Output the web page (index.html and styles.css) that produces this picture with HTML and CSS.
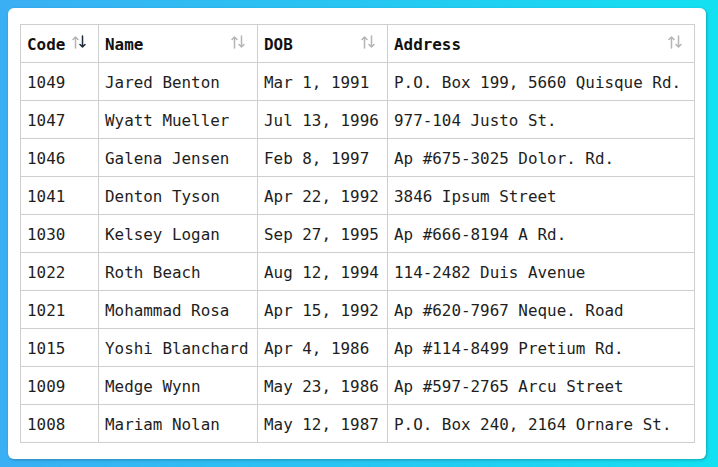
FILE: index.html
```html
<!DOCTYPE html>
<html>
<head>
<meta charset="utf-8">
<link rel="stylesheet" href="styles.css">
</head>
<body>
<div class="card">
<table class="grid">
<colgroup><col class="c1"><col class="c2"><col class="c3"><col class="c4"></colgroup>
<thead>
<tr>
<th><div class="th"><span>Code</span><svg class="sort active" viewBox="0 0 16 14" width="16" height="14"><path class="up" d="M4.5 13V2M2 4.5L4.5 2L7 4.5"/><path class="down" d="M11.5 1V12M9 9.5L11.5 12L14 9.5"/></svg></div></th>
<th><div class="th"><span>Name</span><svg class="sort" viewBox="0 0 16 14" width="16" height="14"><path class="up" d="M4.5 13V2M2 4.5L4.5 2L7 4.5"/><path class="down" d="M11.5 1V12M9 9.5L11.5 12L14 9.5"/></svg></div></th>
<th><div class="th"><span>DOB</span><svg class="sort" viewBox="0 0 16 14" width="16" height="14"><path class="up" d="M4.5 13V2M2 4.5L4.5 2L7 4.5"/><path class="down" d="M11.5 1V12M9 9.5L11.5 12L14 9.5"/></svg></div></th>
<th><div class="th"><span>Address</span><svg class="sort" viewBox="0 0 16 14" width="16" height="14"><path class="up" d="M4.5 13V2M2 4.5L4.5 2L7 4.5"/><path class="down" d="M11.5 1V12M9 9.5L11.5 12L14 9.5"/></svg></div></th>
</tr>
</thead>
<tbody>
<tr><td>1049</td><td>Jared Benton</td><td>Mar 1, 1991</td><td>P.O. Box 199, 5660 Quisque Rd.</td></tr>
<tr><td>1047</td><td>Wyatt Mueller</td><td>Jul 13, 1996</td><td>977-104 Justo St.</td></tr>
<tr><td>1046</td><td>Galena Jensen</td><td>Feb 8, 1997</td><td>Ap #675-3025 Dolor. Rd.</td></tr>
<tr><td>1041</td><td>Denton Tyson</td><td>Apr 22, 1992</td><td>3846 Ipsum Street</td></tr>
<tr><td>1030</td><td>Kelsey Logan</td><td>Sep 27, 1995</td><td>Ap #666-8194 A Rd.</td></tr>
<tr><td>1022</td><td>Roth Beach</td><td>Aug 12, 1994</td><td>114-2482 Duis Avenue</td></tr>
<tr><td>1021</td><td>Mohammad Rosa</td><td>Apr 15, 1992</td><td>Ap #620-7967 Neque. Road</td></tr>
<tr><td>1015</td><td>Yoshi Blanchard</td><td>Apr 4, 1986</td><td>Ap #114-8499 Pretium Rd.</td></tr>
<tr><td>1009</td><td>Medge Wynn</td><td>May 23, 1986</td><td>Ap #597-2765 Arcu Street</td></tr>
<tr><td>1008</td><td>Mariam Nolan</td><td>May 12, 1987</td><td>P.O. Box 240, 2164 Ornare St.</td></tr>
</tbody>
</table>
</div>
</body>
</html>
```
FILE: styles.css
```css
html, body {
  margin: 0;
  height: 100%;
}
body {
  background: linear-gradient(to right, #3aaff4 0%, #27c6f2 50%, #12e1f1 100%);
  padding: 8px;
  box-sizing: border-box;
  font-family: "DejaVu Sans Mono", "Liberation Mono", monospace;
  color: #1e1e1e;
}
.card {
  width: 698px;
  height: 451px;
  box-sizing: border-box;
  background: #fff;
  border-radius: 6px;
  box-shadow: 1px 1px 3px rgba(0, 0, 0, 0.25);
  padding: 16px 12px;
}
.grid {
  border-collapse: collapse;
  table-layout: fixed;
  width: 674px;
  font-size: 15.9px;
}
.c1 { width: 78px; }
.c2 { width: 159px; }
.c3 { width: 130px; }
.c4 { width: 307px; }
.grid th, .grid td {
  border: 1px solid #cfcfcf;
  padding: 2px 6px 0 6px;
  height: 35px;
  line-height: 35px;
  text-align: left;
  white-space: nowrap;
  overflow: hidden;
}
.grid th {
  font-weight: bold;
  color: #111;
  padding-right: 11px;
}
.th {
  display: flex;
  align-items: center;
  justify-content: space-between;
  gap: 6px;
}
.sort {
  fill: none;
  stroke: #b5b5b5;
  stroke-width: 1.5;
  stroke-linecap: round;
  stroke-linejoin: round;
  margin-top: -5px;
  flex: none;
}
.sort.active .down {
  stroke: #1f2a3a;
}
```
